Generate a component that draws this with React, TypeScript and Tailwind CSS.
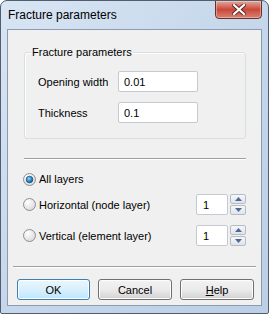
import React from "react";

const font = { fontFamily: "'Liberation Sans', Arial, sans-serif" };

function Radio({ checked }: { checked?: boolean }) {
  return (
    <svg width="13" height="13" viewBox="0 0 13 13" className="shrink-0">
      <defs>
        <radialGradient id="rg" cx="0.35" cy="0.3" r="0.8">
          <stop offset="0" stopColor="#ffffff" />
          <stop offset="1" stopColor="#d6d6d6" />
        </radialGradient>
        <radialGradient id="dot" cx="0.4" cy="0.35" r="0.7">
          <stop offset="0" stopColor="#8fd3ff" />
          <stop offset="0.6" stopColor="#2a88c8" />
          <stop offset="1" stopColor="#15507e" />
        </radialGradient>
      </defs>
      <circle cx="6.5" cy="6.5" r="6" fill="url(#rg)" stroke="#8a8f95" strokeWidth="1" />
      {checked && <circle cx="6.5" cy="6.5" r="3.3" fill="url(#dot)" stroke="#1d4f78" strokeWidth="0.8" />}
    </svg>
  );
}

function SpinHalf({ up }: { up?: boolean }) {
  return (
    <div className="h-[10px] w-[16px] rounded-[2px] border border-[#b6bcc6] bg-gradient-to-b from-[#f6f7f9] to-[#dfe3ea] flex items-center justify-center">
      <svg width="7" height="4" viewBox="0 0 7 4">
        {up ? <polygon points="0,4 7,4 3.5,0" fill="#4e6a92" /> : <polygon points="0,0 7,0 3.5,4" fill="#4e6a92" />}
      </svg>
    </div>
  );
}

function Spin() {
  return (
    <div className="flex items-center gap-[2px]">
      <div className="w-[32px] h-[21px] bg-white border border-[#c5cad2] rounded-[2px] flex items-center pl-[6px] text-black">1</div>
      <div className="flex flex-col gap-[1px]">
        <SpinHalf up />
        <SpinHalf />
      </div>
    </div>
  );
}

function Btn({ children, def }: { children: React.ReactNode; def?: boolean }) {
  return (
    <div
      className={
        "h-[21px] rounded-[3px] border flex items-center justify-center text-black " +
        (def
          ? "w-[73px] border-[#3c7fb1] bg-gradient-to-b from-[#eaf6fd] via-[#d9f0fc] to-[#bee6fd] shadow-[inset_0_0_0_1px_#ffffff]"
          : "w-[74px] border-[#707070] bg-gradient-to-b from-[#f2f2f2] via-[#ebebeb] to-[#d2d2d2] shadow-[inset_0_0_0_1px_#fcfcfc]")
      }
    >
      {children}
    </div>
  );
}

export default function App() {
  return (
    <div
      className="w-[269px] h-[314px] rounded-t-[7px] rounded-b-[2px] border border-[#4f5d6e] bg-gradient-to-br from-[#d8e5f3] via-[#c6d7eb] to-[#bccfe6] flex flex-col overflow-hidden"
      style={font}
    >
      <div className="h-[28px] flex items-start shrink-0">
        <div className="pl-[7px] pt-[7px] text-[12px] text-black leading-[15px]">Fracture parameters</div>
        <div className="ml-auto mr-[6px] w-[47px] h-[19px] -mt-[1px] rounded-b-[4px] border border-[#6b2f2b] bg-gradient-to-b from-[#e3a79c] via-[#c9473b] to-[#d98070] flex items-center justify-center shadow-[inset_0_0_0_1px_rgba(255,255,255,0.35)]">
          <svg width="14" height="11" viewBox="0 0 14 11">
            <path d="M2 1 L12 10 M12 1 L2 10" stroke="#5a2622" strokeWidth="4" strokeLinecap="square" />
            <path d="M2 1 L12 10 M12 1 L2 10" stroke="#ffffff" strokeWidth="2.2" strokeLinecap="square" />
          </svg>
        </div>
      </div>
      <div className="mx-[6px] mb-[7px] flex-1 border border-[#8d9bb0] bg-[#f0f0f0] flex flex-col text-black text-[11px] leading-[14px]">
        <div className="mt-[22px] ml-[16px] w-[222px] h-[87px] border border-[#d5dfe5] rounded-[3px] shadow-[inset_1px_1px_0_#ffffff] flex flex-col">
          <div className="-mt-[8px] ml-[6px] self-start bg-[#f0f0f0] px-[1px]">Fracture parameters</div>
          <div className="mt-[12px] flex items-center">
            <span className="ml-[13px] w-[80px]">Opening width</span>
            <div className="w-[80px] h-[21px] bg-white border border-[#c5cad2] rounded-[2px] flex items-center pl-[5px]">0.01</div>
          </div>
          <div className="mt-[10px] flex items-center">
            <span className="ml-[13px] w-[80px]">Thickness</span>
            <div className="w-[80px] h-[21px] bg-white border border-[#c5cad2] rounded-[2px] flex items-center pl-[5px]">0.1</div>
          </div>
        </div>
        <div className="mt-[19px] ml-[16px] w-[222px] h-[1px] bg-[#a0a0a0] shadow-[0_1px_0_#ffffff]" />
        <div className="mt-[13px] ml-[15px] flex items-center gap-[3px] h-[14px]">
          <Radio checked />
          <span>All layers</span>
        </div>
        <div className="mt-[8px] ml-[15px] mr-[15px] flex items-center h-[21px]">
          <Radio />
          <span className="ml-[3px]">Horizontal (node layer)</span>
          <div className="ml-auto">
            <Spin />
          </div>
        </div>
        <div className="mt-[10px] ml-[15px] mr-[15px] flex items-center h-[21px]">
          <Radio />
          <span className="ml-[3px]">Vertical (element layer)</span>
          <div className="ml-auto">
            <Spin />
          </div>
        </div>
        <div className="mt-[20px] mx-[5px] h-[1px] bg-[#a0a0a0] shadow-[0_1px_0_#ffffff]" />
        <div className="mt-[12px] ml-[9px] flex gap-[8px]">
          <Btn def>OK</Btn>
          <Btn>Cancel</Btn>
          <Btn>
            <span><span className="underline">H</span>elp</span>
          </Btn>
        </div>
      </div>
    </div>
  );
}
